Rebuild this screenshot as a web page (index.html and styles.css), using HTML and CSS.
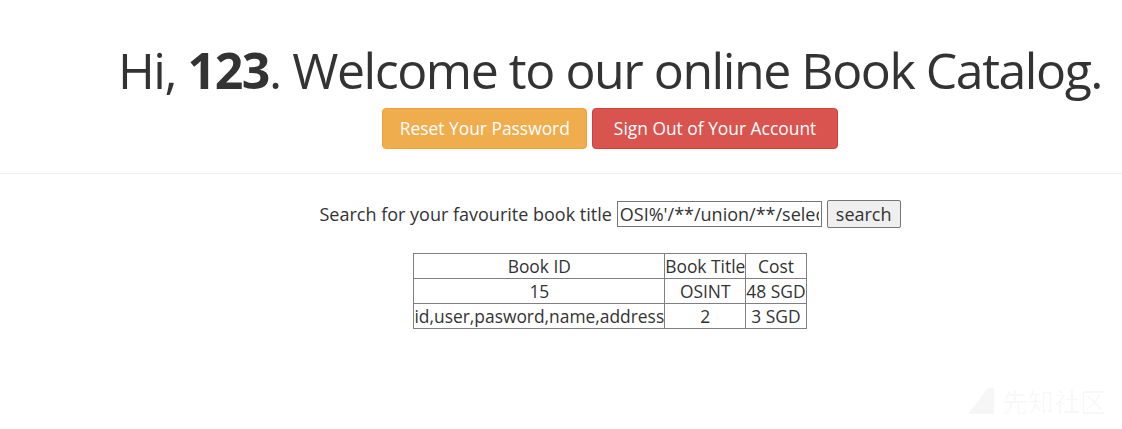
FILE: index.html
```html
<!DOCTYPE html>
<html>
<head>
<meta charset="utf-8">
<link rel="stylesheet" href="styles.css">
</head>
<body>
<div class="page">
  <div class="page-header">
    <h1 class="title">Hi, <b>123</b>. Welcome to our online Book Catalog.</h1>
    <div class="actions">
      <a class="btn btn-warning">Reset Your Password</a>
      <a class="btn btn-danger">Sign Out of Your Account</a>
    </div>
  </div>
  <div class="content">
    <form class="search">
      <label class="search-label">Search for your favourite book title</label>
      <input class="search-input" type="text" value="OSI%'/**/union/**/select/**/1,2,3#">
      <button class="search-btn" type="button">search</button>
    </form>
    <table class="books">
      <tr><td>Book ID</td><td>Book Title</td><td>Cost</td></tr>
      <tr><td>15</td><td>OSINT</td><td>48 SGD</td></tr>
      <tr><td>id,user,pasword,name,address</td><td>2</td><td>3 SGD</td></tr>
    </table>
  </div>
</div>
<div class="watermark">
  <svg class="wm-logo" width="26" height="26" viewBox="0 0 26 26"><polygon points="0,26 20,0 26,0 26,26" fill="currentColor"/></svg>
  <span>先知社区</span>
</div>
</body>
</html>
```
FILE: styles.css
```css
html, body { margin: 0; padding: 0; background: #fff; }
body { font-family: "Open Sans", "Noto Sans", sans-serif; color: #333; }
.page-header {
  text-align: center;
  padding: 36px 0 24px 98px;
  border-bottom: 1px solid #eee;
}
.title {
  margin: 0;
  font-size: 50px;
  letter-spacing: -1.45px;
  font-weight: 400;
  line-height: 68px;
  white-space: nowrap;
}
.title b { font-weight: 700; }
.actions { display: flex; justify-content: center; gap: 5px; margin-top: 4px; }
.btn {
  display: inline-block;
  color: #fff;
  font-size: 17.4px;
  line-height: 23px;
  padding: 8px 16px 8px;
  border-radius: 4px;
  border: 1px solid transparent;
}
.btn-warning { background: #f0ad4e; border-color: #eea236; padding-left: 16.5px; padding-right: 16.5px; }
.btn-danger { background: #d9534f; border-color: #d43f3a; padding-left: 20.5px; padding-right: 20.5px; }
.content { padding: 26px 0 0 98px; }
.search { display: flex; justify-content: center; align-items: center; gap: 5px; margin: 0; }
.search-label { font-size: 18px; }
.search-input {
  width: 199px; height: 22px; padding: 1px 2px;
  font: 18px "Open Sans", sans-serif; color: #333;
  border: 1px solid #767676; margin: 0; border-radius: 0;
}
.search-btn {
  height: 28px; padding: 0 8px; margin: 0;
  font: 18px "Open Sans", sans-serif; color: #333;
  background: #efefef; border: 1px solid #767676; border-radius: 2px;
}
.books {
  margin: 25px auto 0;
  border-collapse: collapse;
  font-family: "Open Sans", sans-serif;
  font-size: 17.4px;
  color: #333;
}
.books td { border: 1px solid #808080; padding: 0; line-height: 24px; text-align: center; }
.watermark {
  position: absolute; right: 16px; bottom: 10px;
  display: flex; align-items: center; gap: 8px;
  font-family: "Noto Sans CJK SC", sans-serif; font-size: 26px;
  color: rgba(0,0,0,0.035);
}
```
